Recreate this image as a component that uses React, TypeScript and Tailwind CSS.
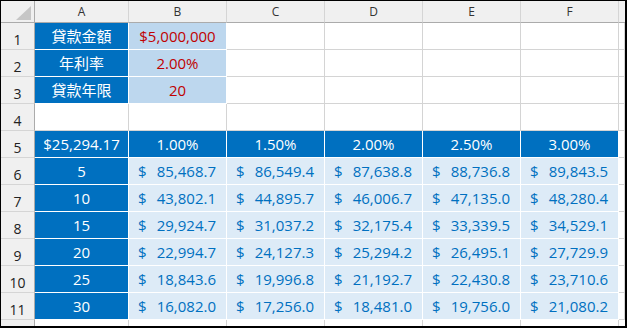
const columns = ["A", "B", "C", "D", "E", "F"];

const rates = ["1.00%", "1.50%", "2.00%", "2.50%", "3.00%"];

const table = [
  { years: "5", values: ["85,468.7", "86,549.4", "87,638.8", "88,736.8", "89,843.5"] },
  { years: "10", values: ["43,802.1", "44,895.7", "46,006.7", "47,135.0", "48,280.4"] },
  { years: "15", values: ["29,924.7", "31,037.2", "32,175.4", "33,339.5", "34,529.1"] },
  { years: "20", values: ["22,994.7", "24,127.3", "25,294.2", "26,495.1", "27,729.9"] },
  { years: "25", values: ["18,843.6", "19,996.8", "21,192.7", "22,430.8", "23,710.6"] },
  { years: "30", values: ["16,082.0", "17,256.0", "18,481.0", "19,756.0", "21,080.2"] }
];

const inputs = [
  { label: "貸款金額", value: "$5,000,000" },
  { label: "年利率", value: "2.00%" },
  { label: "貸款年限", value: "20" }
];

const RowHead = ({ n }: { n: number }) => (
  <div className="bg-[#f0f0f0] border-r border-r-[#ababab] border-b border-b-[#d5d5d5] flex items-end justify-center pb-[2px] text-[14px] text-[#222]">
    {n}
  </div>
);

const Empty = () => <div className="bg-white border-r border-b border-[#d4d4d4]" />;

const Blue = ({ children }: { children: React.ReactNode }) => (
  <div className="bg-[#0070c0] border-r border-b border-white flex items-center justify-center text-white">
    {children}
  </div>
);

const Money = ({ value }: { value: string }) => (
  <div className="bg-[#ddebf7] border-r border-b border-white flex items-center justify-between pl-[9px] pr-[10px] text-[#0070c0]">
    <span>$</span>
    <span>{value}</span>
  </div>
);

export default function App() {
  return (
    <div
      className="w-[627px] h-[328px] box-border border-t border-l border-r-2 border-b-2 border-black bg-white overflow-hidden text-[15px] leading-none"
      style={{ fontFamily: '"Open Sans", "Noto Sans CJK TC", sans-serif' }}
    >
      <div className="grid grid-cols-[34px_94px_repeat(5,98px)_1fr] grid-rows-[22px_repeat(11,27px)_1fr] h-full">
        {/* column headers */}
        <div className="bg-[#f0f0f0] border-r border-r-[#ababab] border-b border-b-[#ababab] flex items-end justify-end pr-[3px] pb-[2px]">
          <svg width="15" height="14" viewBox="0 0 15 14">
            <polygon points="15,0 15,14 0,14" fill="#c6c6c6" />
          </svg>
        </div>
        {columns.map((c) => (
          <div
            key={c}
            className="bg-[#f0f0f0] border-r border-r-[#d5d5d5] border-b border-b-[#ababab] flex items-center justify-center text-[12px] text-[#333]"
          >
            {c}
          </div>
        ))}
        <div className="bg-[#f0f0f0] border-b border-b-[#ababab]" />

        {/* inputs */}
        {inputs.map((row, i) => (
          <div key={row.label} className="contents">
            <RowHead n={i + 1} />
            <Blue>{row.label}</Blue>
            <div className="bg-[#bdd7ee] border-r border-b border-white flex items-center justify-center text-[#c00000]">
              {row.value}
            </div>
            <Empty />
            <Empty />
            <Empty />
            <Empty />
            <Empty />
          </div>
        ))}

        {/* row 4 */}
        <RowHead n={4} />
        <Empty />
        <Empty />
        <Empty />
        <Empty />
        <Empty />
        <Empty />
        <Empty />

        {/* row 5 */}
        <RowHead n={5} />
        <Blue>$25,294.17</Blue>
        {rates.map((r) => (
          <Blue key={r}>{r}</Blue>
        ))}
        <Empty />

        {/* table */}
        {table.map((row, i) => (
          <div key={row.years} className="contents">
            <RowHead n={i + 6} />
            <Blue>{row.years}</Blue>
            {row.values.map((v) => (
              <Money key={v} value={v} />
            ))}
            <Empty />
          </div>
        ))}

        {/* row 12 (cut off) */}
        <div className="bg-[#f0f0f0] border-r border-r-[#ababab]" />
        <div className="bg-white border-r border-[#d4d4d4]" />
        <div className="bg-white border-r border-[#d4d4d4]" />
        <div className="bg-white border-r border-[#d4d4d4]" />
        <div className="bg-white border-r border-[#d4d4d4]" />
        <div className="bg-white border-r border-[#d4d4d4]" />
        <div className="bg-white border-r border-[#d4d4d4]" />
        <div className="bg-white" />
      </div>
    </div>
  );
}
